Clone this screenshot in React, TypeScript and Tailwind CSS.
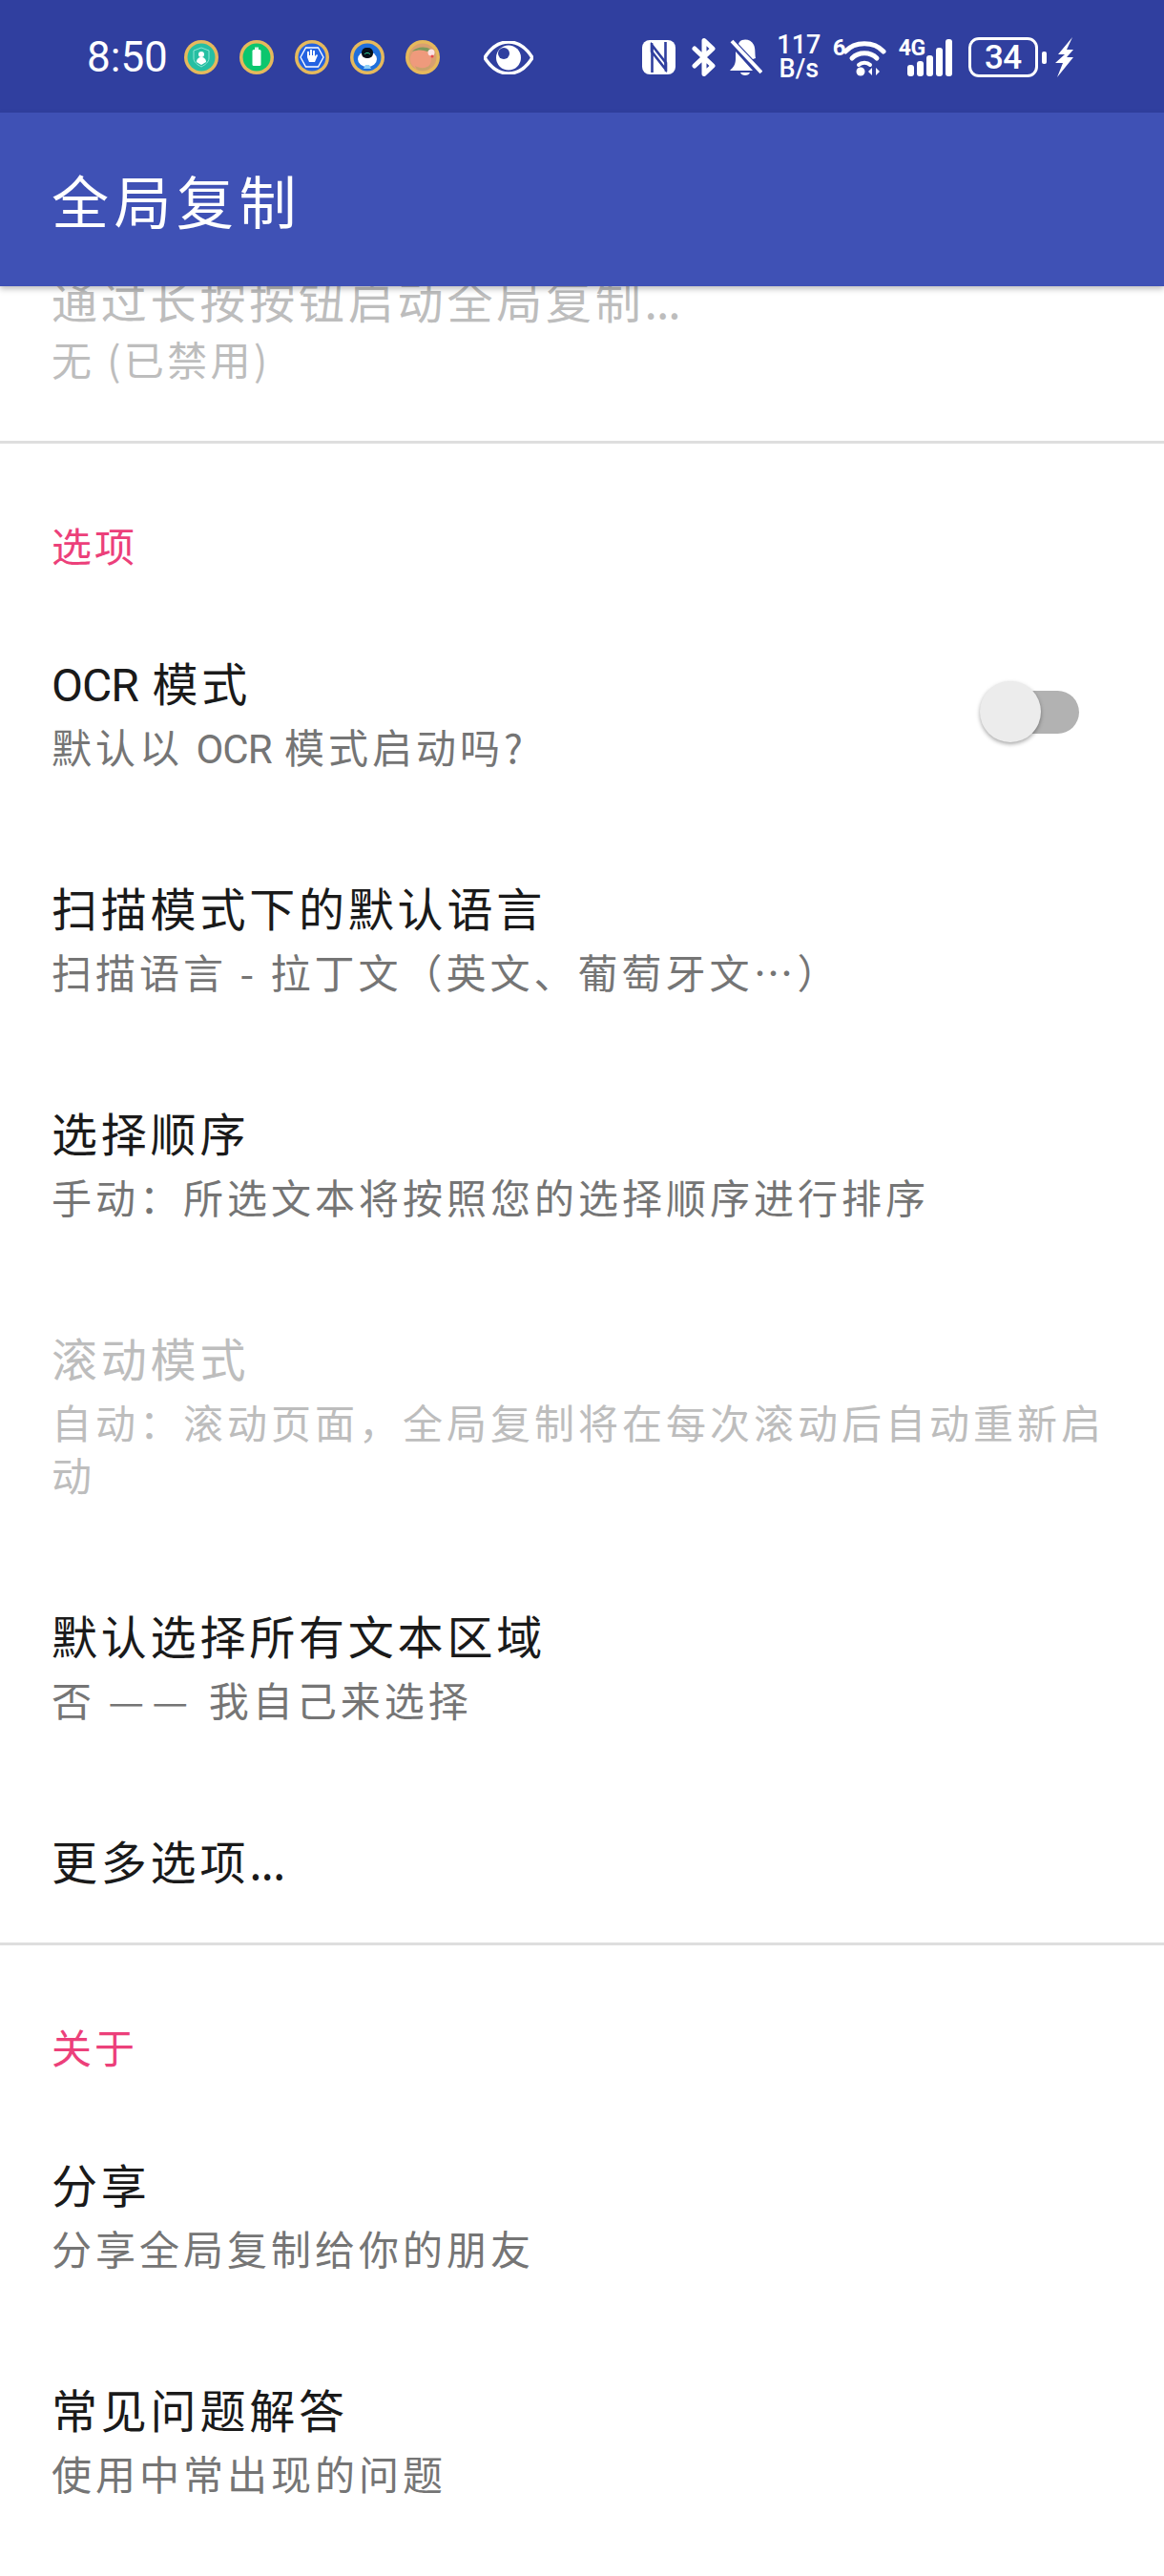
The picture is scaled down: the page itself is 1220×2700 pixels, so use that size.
const cjk = "font-['Noto_Sans_CJK_SC','Noto_Sans',sans-serif]";

function Badge({ fill, children }: { fill: string; children?: React.ReactNode }) {
  return (
    <svg width="36" height="36" viewBox="0 0 36 36" className="shrink-0">
      <circle cx="18" cy="18" r="18" fill="#e6b95c" />
      <circle cx="18" cy="18" r="14.5" fill={fill} />
      {children}
    </svg>
  );
}

function Notifications() {
  return (
    <div className="flex items-center gap-[22px] ml-[17px]">
      <Badge fill="#26bfa3">
        <path d="M18 8l8 3v8c0 4-4 7-8 9-4-2-8-5-8-9v-8z" fill="none" stroke="#8fe6d4" strokeWidth="1" />
        <circle cx="18" cy="15" r="3" fill="#fff" />
        <path d="M13 23c0-3 2-5 5-5s5 2 5 5l-5 3z" fill="#fff" />
      </Badge>
      <Badge fill="#0bc66e">
        <rect x="16" y="7.5" width="4" height="3" fill="#d9f7e8" />
        <rect x="13.5" y="10" width="9" height="17" rx="1.5" fill="#fff" />
      </Badge>
      <Badge fill="#2463e2">
        <path d="M11.500 8h13l5.500 10-5.500 10h-13L6 18z" fill="none" stroke="#fff" strokeWidth="1.300" />
        <path d="M13 18v-6h2v4h1v-6h2v6h1v-5h2v6l2-2 1 1-3 7h-6z" fill="#fff" />
      </Badge>
      <Badge fill="#1f6fdc">
        <ellipse cx="18" cy="20" rx="10" ry="8" fill="#fff" />
        <rect x="12" y="8" width="12" height="11" rx="5" fill="#06101c" />
        <path d="M15 15c1-2 5-2 6 0" fill="none" stroke="#2fe0a0" strokeWidth="1" />
        <path d="M14 30h8l-2-4h-4z" fill="#8fd0f5" />
      </Badge>
      <Badge fill="#d9a070">
        <circle cx="16" cy="20" r="11" fill="#ef9a7c" />
        <path d="M7 12c4-5 14-6 20-2l-4 2c-5-2-10-2-16 0z" fill="#7c9a5c" />
        <path d="M10 27c5 3 12 3 16-1 1 3-3 6-8 6s-7-2-8-5z" fill="#c9a36a" />
        <circle cx="27" cy="13" r="3.500" fill="#fbe3e3" />
        <circle cx="28" cy="17" r="1.500" fill="#e8484e" />
      </Badge>
    </div>
  );
}

function StatusIcons() {
  return (
    <div className="flex items-center ml-[114px] text-white">
      {/* nfc */}
      <svg width="35" height="36" viewBox="0 0 35 36" fill="#fff">
        <rect width="35" height="36" rx="8" />
        <path d="M10.500 34V5.500L25 24v9" fill="none" stroke="#303f9f" strokeWidth="2.600" />
        <path d="M24.500 2v28.500L10 12V3" fill="none" stroke="#303f9f" strokeWidth="2.600" />
      </svg>
      {/* bluetooth */}
      <svg width="25" height="40" viewBox="0 0 25 40" fill="none" stroke="#fff" strokeWidth="5" className="ml-[17px]" strokeLinejoin="round" strokeLinecap="round">
        <path d="M3 11l19 18-9 8.500V2.500l9 8.500L3 29" />
      </svg>
      {/* bell off */}
      <svg width="34" height="40" viewBox="0 0 34 40" fill="#fff" className="ml-[15px]">
        <path d="M10 4c4-4 12-3 15 3 2 4 1 9 2 14l-3 1L9 6z" />
        <path d="M6 14l18 20H0c3-3 6-6 6-12z" />
        <path d="M11 36h10c-1 4-9 4-10 0z" />
        <path d="M2 3l31 33" stroke="#fff" strokeWidth="4" />
      </svg>
      {/* speed */}
      <div className="ml-[17px] w-[43px] flex flex-col items-center font-['Roboto',sans-serif] font-medium text-[27px] leading-[25px] whitespace-nowrap">
        <span>117</span>
        <span>B/s</span>
      </div>
      {/* wifi */}
      <div className="ml-[14px] relative w-[56px] h-[40px]">
        <span className="absolute left-0 -top-[4px] font-['Roboto',sans-serif] font-bold text-[24px] leading-[28px]">6</span>
        <svg width="56" height="40" viewBox="0 0 56 40" fill="none" stroke="#fff" strokeWidth="5" strokeLinecap="round" className="absolute left-0 top-0">
          <path d="M13 14c10-11 30-11 40 0" />
          <path d="M20 21c7-7 19-7 26 0" />
          <path d="M27 28c3-3 9-3 12 0" strokeWidth="4" />
          <circle cx="29" cy="35" r="4.500" fill="#fff" stroke="none" />
          <path d="M41 31v8l-4-4zM45 31v8l4-4z" fill="#fff" stroke="none" />
        </svg>
      </div>
      {/* cell */}
      <div className="ml-[13px] relative w-[56px] h-[40px]">
        <span className="absolute left-0 top-[0px] font-['Roboto',sans-serif] font-bold text-[23px] leading-[22px] tracking-[-0.5px]">4G</span>
        <svg width="56" height="40" viewBox="0 0 56 40" fill="#fff" className="absolute left-0 top-0">
          <rect x="9" y="28" width="7" height="12" rx="3" />
          <rect x="19" y="24" width="7" height="16" rx="3" />
          <rect x="29" y="18" width="7" height="22" rx="3" />
          <rect x="39" y="10" width="7" height="30" rx="3" />
          <rect x="49" y="1" width="7" height="39" rx="3" />
        </svg>
      </div>
      {/* battery */}
      <div className="ml-[17px] w-[73px] h-[42px] rounded-[11px] border-[3px] border-white flex items-center justify-center font-['Roboto',sans-serif] font-medium text-[35px] tracking-[-0.5px] leading-none">
        34
      </div>
      <div className="ml-[4px] w-[5px] h-[13px] rounded-[2px] bg-white" />
      <svg width="19" height="42" viewBox="0 0 19 42" fill="#fff" className="ml-[9px]">
        <path d="M18 0L3 18h7L0 27h8L2 42l17-21h-7l7-8h-7z" />
      </svg>
    </div>
  );
}

function StatusBar() {
  return (
    <div className="h-[118px] bg-[#303f9f] flex items-center pl-[91px] pt-[2px] shrink-0">
      <span className="font-['Roboto',sans-serif] text-white text-[44px] leading-none">8:50</span>
      <Notifications />
      {/* eye */}
      <svg width="52" height="35" viewBox="0 0 52 35" className="ml-[46px]">
        <path d="M1 17.500C8 6 17 1 26 1s18 5 25 16.500C44 29 35 34 26 34S8 29 1 17.500z" fill="none" stroke="#fff" strokeWidth="3.500" />
        <circle cx="26" cy="17.500" r="13" fill="#fff" />
        <circle cx="21" cy="13" r="6" fill="#303f9f" />
      </svg>
      <StatusIcons />
    </div>
  );
}

function Row({ title, sub, disabled }: { title: React.ReactNode; sub?: React.ReactNode; disabled?: boolean }) {
  return (
    <div className={`px-[54px] pt-[51px] pr-[60px] ${sub ? "pb-[51px]" : "pb-[47px]"}`}>
      <div className={`text-[48px] leading-[79px] tracking-[3.8px] ${disabled ? "text-[#bdbdbd]" : "text-[#1a1a1a]"}`}>{title}</div>
      {sub && <div className={`text-[42px] leading-[55px] tracking-[4px] ${disabled ? "text-[#bdbdbd]" : "text-[#757575]"}`}>{sub}</div>}
    </div>
  );
}

function SectionHeader({ label }: { label: string }) {
  return (
    <div className="px-[54px] pt-[84px] pb-[31px] text-[42px] leading-[44px] tracking-[3px] text-[#ec407a]">{label}</div>
  );
}

function Dots() {
  return <span className="tracking-[-1px]">...</span>;
}

function Ocr() {
  return <span className="font-['Roboto',sans-serif] leading-none tracking-[-1px]">OCR</span>;
}

export default function App() {
  return (
    <div className={`w-[1220px] h-[2700px] flex flex-col overflow-hidden bg-white ${cjk}`}>
      <StatusBar />
      <div className="h-[182px] bg-[#3f51b5] flex items-center px-[54px] shadow-[0_3px_6px_rgba(0,0,0,0.25)] relative z-10 shrink-0">
        <span className="text-white text-[60px] leading-none tracking-[5.5px]">全局复制</span>
      </div>

      <div className="flex-1 overflow-hidden">
        <div className="-mt-[77px]">
          {/* scrolled under the app bar */}
          <div className="px-[54px] pt-[51px] pb-[63px]">
            <div className="text-[48px] leading-[79px] tracking-[3.8px] text-[#bdbdbd]">通过长按按钮启动全局复制<Dots /></div>
            <div className="text-[42px] leading-[46px] tracking-[3.4px] text-[#bdbdbd]">无 (已禁用)</div>
          </div>
          <div className="h-[3px] bg-[#dedede]" />
          <SectionHeader label="选项" />
          <div className="flex items-center">
            <div className="flex-1">
              <Row title={<><Ocr /> 模式</>} sub={<>默认以 <Ocr /> 模式启动吗?</>} />
            </div>
            <div className="relative w-[104px] h-[64px] mr-[89px] mt-[8px]">
              <div className="absolute left-[13px] right-0 top-[10px] h-[45px] rounded-full bg-[#b2b2b2]" />
              <div className="absolute left-0 top-0 w-[64px] h-[64px] rounded-full bg-[#ececec] shadow-[0_2px_4px_rgba(0,0,0,0.35)]" />
            </div>
          </div>
          <Row title="扫描模式下的默认语言" sub="扫描语言 - 拉丁文（英文、葡萄牙文…）" />
          <Row title="选择顺序" sub="手动：所选文本将按照您的选择顺序进行排序" />
          <Row title="滚动模式" sub="自动：滚动页面，全局复制将在每次滚动后自动重新启动" disabled />
          <Row
            title="默认选择所有文本区域"
            sub={<>否 <span className="inline-block w-[46px]">—</span><span className="inline-block w-[46px]">—</span> 我自己来选择</>}
          />
          <Row title={<>更多选项<Dots /></>} />
          <div className="h-[3px] bg-[#dedede]" />
          <SectionHeader label="关于" />
          <Row title="分享" sub="分享全局复制给你的朋友" />
          <Row title="常见问题解答" sub="使用中常出现的问题" />
        </div>
      </div>
    </div>
  );
}
